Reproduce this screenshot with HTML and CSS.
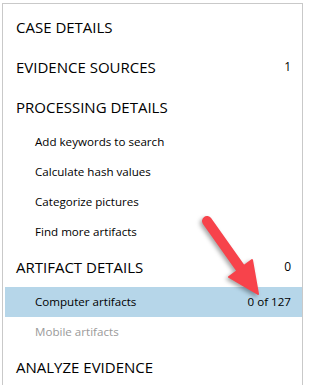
FILE: index.html
```html
<!DOCTYPE html>
<html lang="en">
  <head>
    <meta charset="UTF-8" />
    <link rel="stylesheet" href="styles.css">
    <title>Case</title>
  </head>
  <body>
    <div class="panel">
      <ul class="nav">
        <li class="nav-head"><span>CASE DETAILS</span></li>
        <li class="nav-head"><span>EVIDENCE SOURCES</span><span class="count">1</span></li>
        <li class="nav-head"><span>PROCESSING DETAILS</span></li>
        <li class="nav-item"><span>Add keywords to search</span></li>
        <li class="nav-item"><span>Calculate hash values</span></li>
        <li class="nav-item"><span>Categorize pictures</span></li>
        <li class="nav-item"><span>Find more artifacts</span></li>
        <li class="nav-head"><span>ARTIFACT DETAILS</span><span class="count">0</span></li>
        <li class="nav-item selected"><span>Computer artifacts</span><span class="count">0 of 127</span></li>
        <li class="nav-item disabled"><span>Mobile artifacts</span></li>
        <li class="nav-head"><span>ANALYZE EVIDENCE</span></li>
      </ul>
      <svg class="arrow" width="90" height="110" viewBox="195 205 90 110">
        <line x1="207" y1="221" x2="241" y2="269" stroke="#f7434b" stroke-width="10" stroke-linecap="round" />
        <polygon points="258,294 229,277 252,260" fill="#f7434b" stroke="#f7434b" stroke-width="2" stroke-linejoin="round" />
      </svg>
    </div>
  </body>
</html>
```

FILE: styles.css
```css
html {
  font-family: "Open Sans", "Noto Sans", sans-serif;
  color: #000000;
}
body {
  margin: 0;
  padding: 3px 0 0 2px;
  overflow: hidden;
}
.panel {
  position: relative;
  width: 299px;
  height: 400px;
  border: 1px solid #c9c9c9;
  border-bottom: none;
}
.nav {
  list-style: none;
  margin: 0 0 0 2px;
  padding: 3px 0 0;
}
.nav li {
  display: flex;
  justify-content: space-between;
  padding: 0 11px 0 11px;
  white-space: nowrap;
}
.nav-head {
  height: 40px;
  line-height: 40px;
  font-size: 15px;
}
.nav-item {
  height: 30px;
  line-height: 30px;
  font-size: 11.6px;
}
.nav .nav-item {
  padding-left: 30px;
}
.nav-head .count {
  font-size: 12px;
}
.selected {
  background: #b6d6e9;
}
.disabled {
  color: #9a9a9a;
}
.arrow {
  position: absolute;
  left: 192px;
  top: 201px;
  filter: drop-shadow(-2px 2px 2px rgba(0, 0, 0, 0.35));
}
```
